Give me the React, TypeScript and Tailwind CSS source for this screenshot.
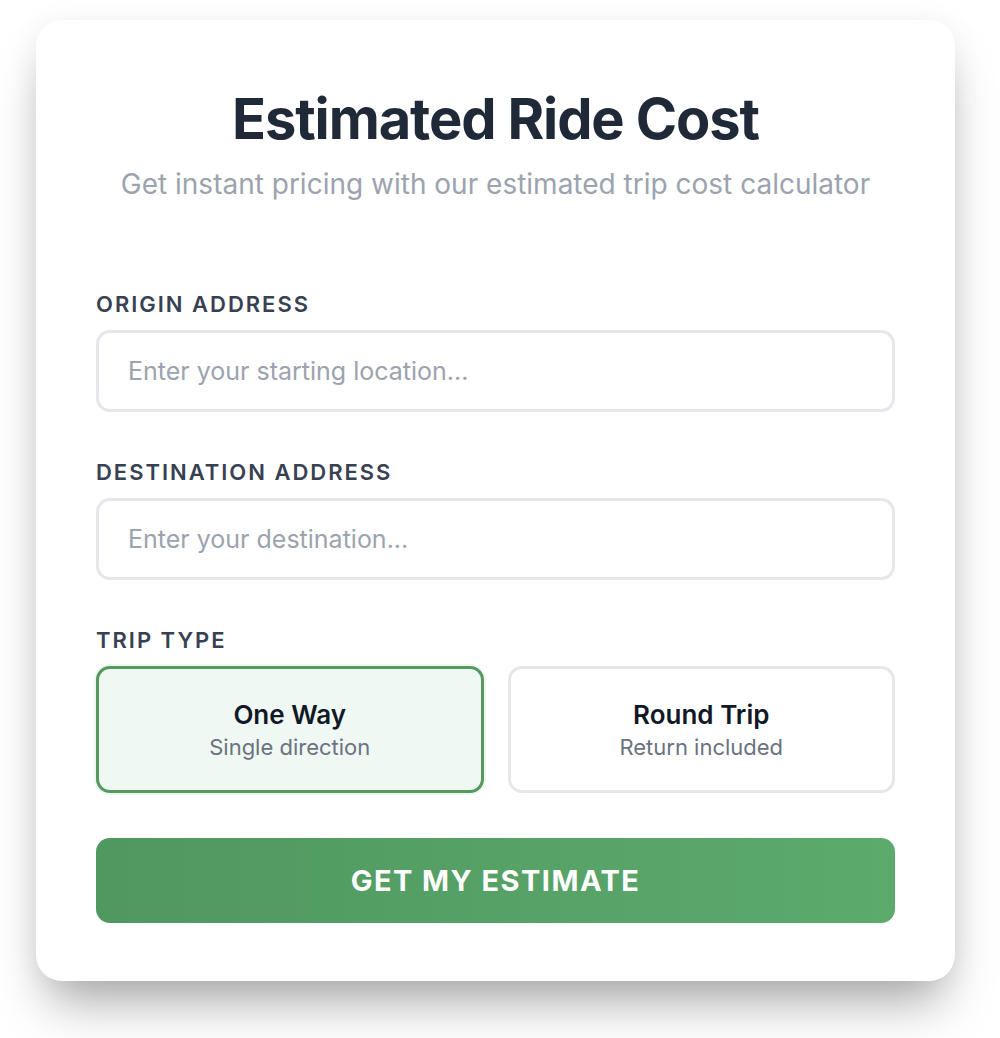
import { useState } from "react";

const font = { fontFamily: "Inter, 'Noto Sans', sans-serif" };

function Field({ label, placeholder }: { label: string; placeholder: string }) {
  return (
    <div>
      <label className="block text-[22px] font-semibold uppercase tracking-[0.09em] text-[#374151] leading-[28px]">
        {label}
      </label>
      <input
        type="text"
        placeholder={placeholder}
        className="mt-[12px] block h-[82px] w-full rounded-[14px] border-[3px] border-[#e5e7eb] bg-white px-[29px] text-[25px] text-[#111827] placeholder:text-[#9ca3af] outline-none"
      />
    </div>
  );
}

export default function App() {
  const [trip, setTrip] = useState<"one" | "round">("one");

  const options = [
    { id: "one" as const, title: "One Way", sub: "Single direction" },
    { id: "round" as const, title: "Round Trip", sub: "Return included" },
  ];

  return (
    <div className="min-h-[1038px] bg-white pt-[20px]" style={font}>
      <div className="ml-[36px] w-[919px] rounded-[26px] bg-white px-[60px] pt-[65px] pb-[58px] shadow-[0_32px_50px_-12px_rgba(0,0,0,0.34),0_0_30px_rgba(0,0,0,0.05)]">
        <h1 className="text-center text-[56px] font-bold leading-[68px] tracking-[-0.02em] text-[#1f2937]">
          Estimated Ride Cost
        </h1>
        <p className="mt-[12px] text-center text-[28px] leading-[38px] text-[#9ca3af]">
          Get instant pricing with our estimated trip cost calculator
        </p>

        <div className="mt-[87px] flex flex-col gap-[46px]">
          <Field label="Origin Address" placeholder="Enter your starting location..." />
          <Field label="Destination Address" placeholder="Enter your destination..." />

          <div>
            <div className="text-[22px] font-semibold uppercase tracking-[0.09em] text-[#374151] leading-[28px]">
              Trip Type
            </div>
            <div className="mt-[12px] grid grid-cols-2 gap-[24px]">
              {options.map((o) => {
                const active = trip === o.id;
                return (
                  <button
                    key={o.id}
                    onClick={() => setTrip(o.id)}
                    className={
                      active
                        ? "flex h-[127px] flex-col items-center justify-center rounded-[14px] border-[3px] border-[#55995f] bg-[#f0f8f3] ring-2 ring-[#eef7f0]"
                        : "flex h-[127px] flex-col items-center justify-center rounded-[14px] border-[3px] border-[#e5e7eb] bg-white"
                    }
                  >
                    <span className="text-[26px] font-semibold leading-[32px] text-[#111827]">{o.title}</span>
                    <span className="mt-[2px] text-[22px] leading-[28px] text-[#6b7280]">{o.sub}</span>
                  </button>
                );
              })}
            </div>
          </div>
        </div>

        <button className="mt-[45px] flex h-[85px] w-full items-center justify-center rounded-[14px] bg-gradient-to-r from-[#4f9860] to-[#5daa6d] text-[29px] font-bold uppercase tracking-[0.05em] text-white">
          Get My Estimate
        </button>
      </div>
    </div>
  );
}
